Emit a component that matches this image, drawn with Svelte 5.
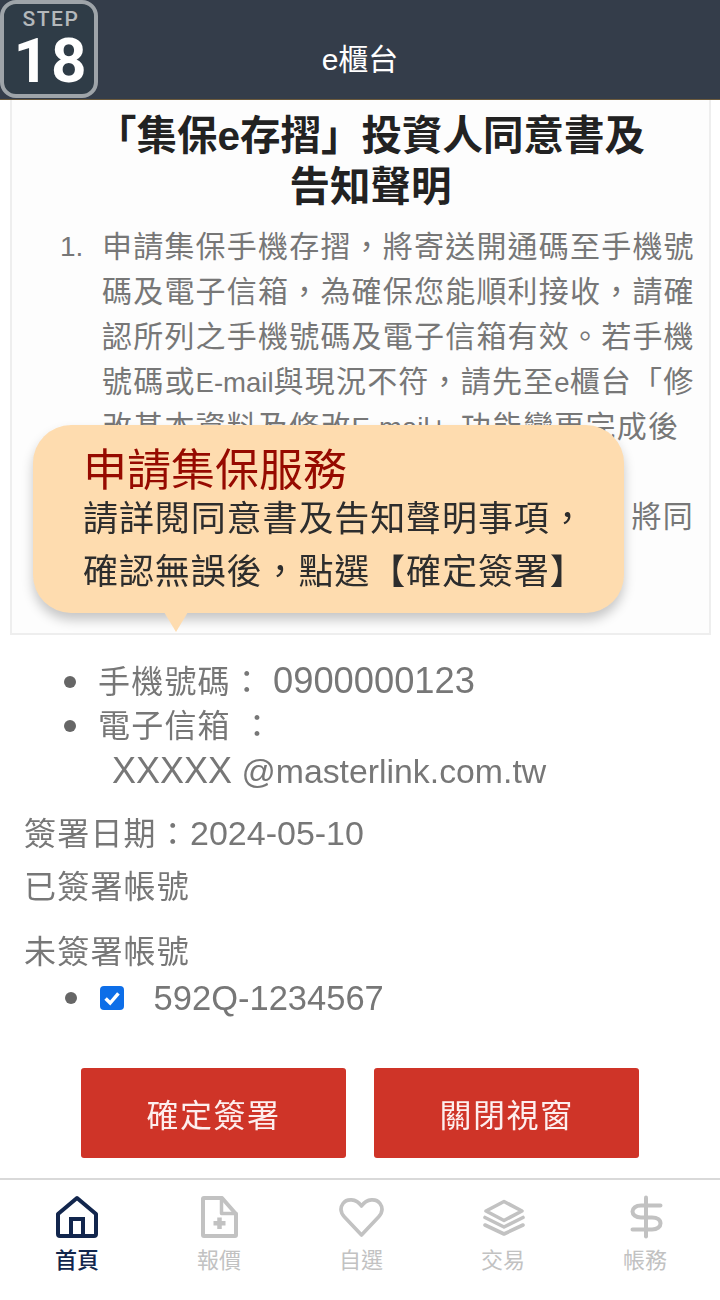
<script>
	const tabs = ['首頁', '報價', '自選', '交易', '帳務'];
</script>

<div class="page">
	<div class="step">
		<span class="step-label">STEP</span>
		<span class="step-num">18</span>
	</div>

	<header class="top">e櫃台</header>

	<main class="content">
		<section class="notice">
			<h1>「集保e存摺」投資人同意書及<br />告知聲明</h1>
			<div class="clause">
				<span class="no">1.</span>
				<div class="text">
					<p>申請集保手機存摺，將寄送開通碼至手機號</p>
					<p>碼及電子信箱，為確保您能順利接收，請確</p>
					<p>認所列之手機號碼及電子信箱有效。若手機</p>
					<p>號碼或<span class="lat">E-mail</span>與現況不符，請先至<span class="lat">e</span>櫃台「修</p>
					<p>改基本資料及修改<span class="lat">E-mail</span>」功能變更完成後</p>
					<p>&nbsp;</p>
					<p class="end">將同</p>
				</div>
			</div>
		</section>

		<ul class="contact">
			<li><span class="cjk">手機號碼：</span><span class="phone">0900000123</span></li>
			<li><span class="cjk">電子信箱 ：</span></li>
			<li class="mail"><span class="x">XXXXX</span> @masterlink.com.tw</li>
		</ul>

		<p class="row date"><span class="cjk">簽署日期：</span>2024-05-10</p>
		<p class="row signed"><span class="cjk">已簽署帳號</span></p>
		<p class="row unsigned"><span class="cjk">未簽署帳號</span></p>

		<ul class="accounts">
			<li>
				<span class="check">
					<svg viewBox="0 0 24 24" width="22" height="22">
						<path d="M5 12.500l5 5 9-10.500" fill="none" stroke="#fff" stroke-width="3.800" />
					</svg>
				</span>
				<span class="acct">592Q-1234567</span>
			</li>
		</ul>

		<div class="actions">
			<button>確定簽署</button>
			<button>關閉視窗</button>
		</div>
	</main>

	<nav class="tabs">
		{#each tabs as tab, i}
			<div class="tab" class:active={i === 0}>
				<svg viewBox="0 0 48 44" width="48" height="44" fill="none" stroke="currentColor" stroke-width="3.600" stroke-linejoin="round" stroke-linecap="round">
					{#if i === 0}
						<path d="M24 3L43 19V39a2 2 0 0 1-2 2H7a2 2 0 0 1-2-2V19z" stroke-width="4" />
						<path d="M18 41V24H30V41" stroke-width="4" stroke-linejoin="miter" />
					{:else if i === 1}
						<path d="M9 3H27L41 19V40a1 1 0 0 1-1 1H9a1 1 0 0 1-1-1V4a1 1 0 0 1 1-1z" stroke-width="4" />
						<path d="M26.500 3V18.500H41" stroke-width="3.500" />
						<path d="M24.500 22.500V34M18.500 28.300H30.500" stroke-width="4.500" stroke-linecap="butt" />
					{:else if i === 2}
						<path d="M24.500 40L7.500 22C3 17 3.500 12 6 8.500C9.500 3.500 19 3 24.500 11C30 3 39.500 3.500 43 8.500C45.500 12 46 17 41.500 22z" />
					{:else if i === 3}
						<path d="M25 6.500L43 16L25 25.500L7 16z" />
						<path d="M6 22.500L25 32L44 22.500" />
						<path d="M6 30L25 39L44 30" />
					{:else}
						<path d="M25 2.500V41.500" stroke-width="4" />
						<path d="M39.500 10.500H20C14.500 10.500 11.500 13.500 11.500 16.500C11.500 19.500 14.500 22.500 20 22.500H31C36.500 22.500 39.500 25 39.500 28.500C39.500 31.500 36.500 34.500 31 34.500H11.500" stroke-width="4" />
					{/if}
				</svg>
				<span>{tab}</span>
			</div>
		{/each}
	</nav>

	<div class="bubble">
		<h2>申請集保服務</h2>
		<p>請詳閱同意書及告知聲明事項，</p>
		<p>確認無誤後，點選【確定簽署】</p>
	</div>
</div>

<style>
	:global(body) {
		margin: 0;
		background: #fff;
	}
	.page {
		position: relative;
		width: 720px;
		height: 1300px;
		display: flex;
		flex-direction: column;
		overflow: hidden;
		font-family: 'Liberation Sans', 'Noto Sans CJK TC', sans-serif;
	}
	.top {
		height: 100px;
		flex: none;
		box-sizing: border-box;
		padding-top: 38px;
		background: #343d4a;
		border-bottom: 1px solid #6b5a3c;
		color: #fff;
		font-size: 30px;
		line-height: 44px;
		text-align: center;
	}
	.step {
		position: absolute;
		left: 0;
		top: 0;
		width: 98px;
		height: 98px;
		box-sizing: border-box;
		padding-left: 4px;
		border: 4px solid #9ea4a9;
		border-radius: 16px;
		background: #2f3c47;
		display: flex;
		flex-direction: column;
		align-items: center;
		font-family: Roboto, 'Liberation Sans', sans-serif;
	}
	.step-label {
		margin-top: 2px;
		color: #b4b8bb;
		font-size: 21px;
		font-weight: 500;
		line-height: 26px;
		letter-spacing: 1.500px;
	}
	.step-num {
		color: #fff;
		font-size: 62px;
		font-weight: 700;
		line-height: 58px;
		letter-spacing: 2px;
	}
	.content {
		flex: 1;
		color: #777;
		filter: blur(0.4px);
	}
	.notice {
		box-sizing: border-box;
		height: 535px;
		margin: 0 9px 0 10px;
		padding-top: 11px;
		border: 2px solid #eeeeee;
		border-top: 0;
		overflow: hidden;
		background: #fdfdfd;
	}
	h1 {
		margin: 0;
		color: #222;
		font-size: 40.500px;
		font-weight: 700;
		line-height: 51px;
		text-align: center;
		padding-left: 20px;
	}
	.clause {
		display: flex;
		margin-top: 11px;
		padding-left: 48px;
		font-size: 30px;
		line-height: 45px;
	}
	.no {
		width: 42px;
		flex: none;
		font-size: 28px;
	}
	.text {
		width: 592px;
		letter-spacing: 1.200px;
	}
	.clause p {
		margin: 0;
		height: 45px;
		white-space: nowrap;
	}
	.lat {
		font-size: 27.500px;
		letter-spacing: 0;
	}
	.clause .end {
		text-align: right;
	}
	.contact {
		margin: 24px 0 0;
		padding: 0 0 0 98px;
		list-style: none;
		font-size: 36px;
		line-height: 44px;
	}
	.contact li,
	.accounts li {
		position: relative;
		height: 44px;
	}
	.contact li:not(.mail)::before,
	.accounts li::before {
		content: '';
		position: absolute;
		left: -34px;
		top: 17px;
		width: 12px;
		height: 12px;
		border-radius: 50%;
		background: #666;
	}
	.cjk {
		font-size: 32px;
		letter-spacing: 1.200px;
	}
	.phone {
		margin-left: 9px;
		font-size: 36.300px;
	}
	.contact .mail {
		margin-top: 2px;
		padding-left: 14px;
		font-size: 33.800px;
	}
	.x {
		font-size: 36px;
	}
	.row {
		margin: 0;
		padding-left: 24px;
		font-size: 34px;
		line-height: 46px;
	}
	.date {
		margin-top: 17px;
	}
	.signed {
		margin-top: 6px;
	}
	.unsigned {
		margin-top: 18px;
	}
	.accounts {
		margin: -1px 0 0;
		padding: 0 0 0 100px;
		list-style: none;
		font-size: 34.500px;
		line-height: 48px;
	}
	.accounts li {
		height: 48px;
	}
	.accounts li::before {
		left: -35px;
		top: 18px;
	}
	.acct {
		margin-left: 20px;
	}
	.check {
		display: inline-flex;
		width: 24px;
		height: 24px;
		align-items: center;
		justify-content: center;
		vertical-align: 1px;
		border-radius: 4px;
		background: #0d6ee8;
	}
	.actions {
		display: flex;
		gap: 28px;
		margin: 46px 0 0 81px;
	}
	button {
		width: 265px;
		height: 90px;
		padding: 0;
		border: 0;
		border-radius: 3px;
		background: #cf3428;
		color: #fdeeee;
		font-family: inherit;
		font-size: 32px;
		letter-spacing: 1.500px;
	}
	.tabs {
		flex: none;
		height: 122px;
		box-sizing: border-box;
		display: grid;
		grid-template-columns: repeat(5, 1fr);
		padding: 15px 4px 0 6px;
		border-top: 2px solid #d9d9d9;
		background: #fff;
	}
	.tab {
		display: flex;
		flex-direction: column;
		align-items: center;
		color: #c2c2c2;
		font-size: 22px;
		line-height: 30px;
	}
	.tab svg {
		margin-bottom: 7px;
	}
	.active {
		color: #12264d;
		font-weight: 500;
	}
	.bubble {
		position: absolute;
		left: 33px;
		top: 425px;
		width: 591px;
		height: 188px;
		box-sizing: border-box;
		padding: 24px 0 0 50px;
		border-radius: 38px;
		background: #fedcaf;
		box-shadow: 0 7px 12px rgba(0, 0, 0, 0.22);
	}
	.bubble::after {
		content: '';
		position: absolute;
		left: 131px;
		top: 187px;
		border-style: solid;
		border-width: 20px 12px 0;
		border-color: #fedcaf transparent transparent;
	}
	h2 {
		margin: 0;
		color: #960a00;
		font-size: 44px;
		font-weight: 400;
		line-height: 43px;
	}
	.bubble p {
		margin: 0;
		color: #2d2d2d;
		font-size: 35px;
		line-height: 53px;
		letter-spacing: 0.900px;
	}
</style>
